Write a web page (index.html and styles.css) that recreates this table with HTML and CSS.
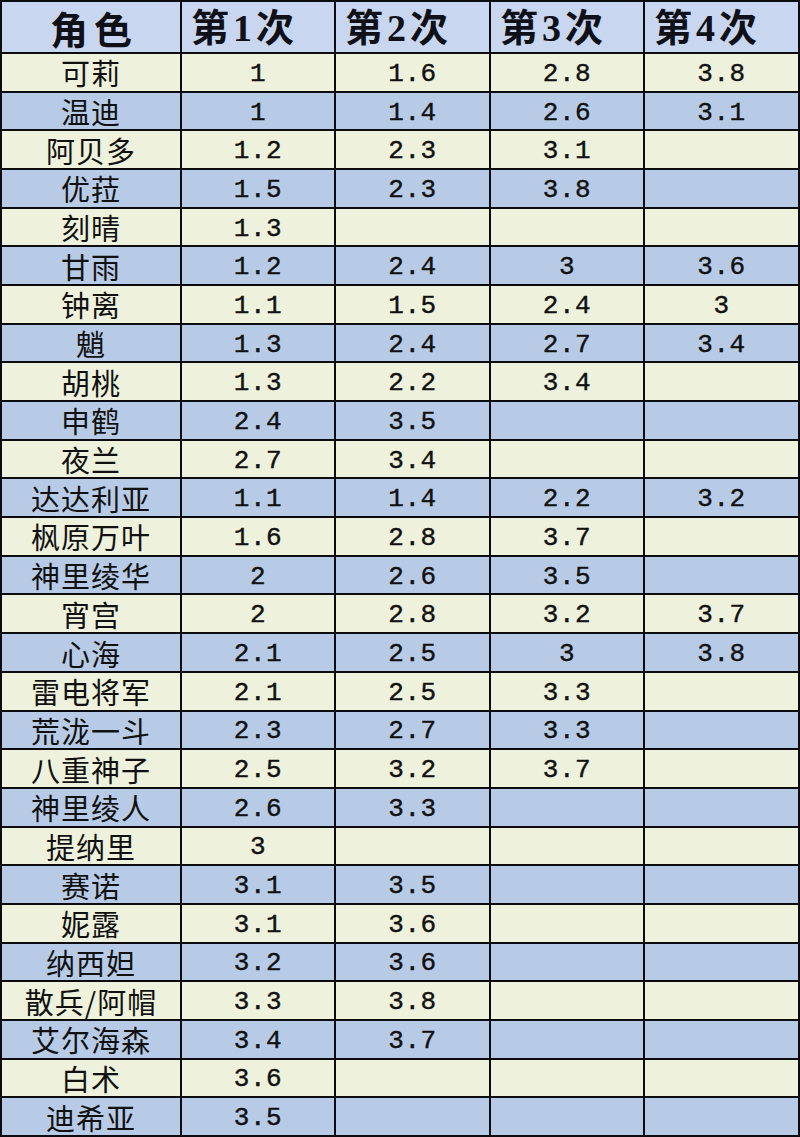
FILE: index.html
```html
<!DOCTYPE html>
<html lang="zh-CN">
<head>
<meta charset="utf-8">
<title>角色表</title>
<link rel="stylesheet" href="styles.css">
</head>
<body>
<div class="sheet">
  <div class="row head"><div class="name">角色</div><div>第1次</div><div>第2次</div><div>第3次</div><div>第4次</div></div>
  <div class="row cream"><div class="name">可莉</div><div>1</div><div>1.6</div><div>2.8</div><div>3.8</div></div>
  <div class="row blue"><div class="name">温迪</div><div>1</div><div>1.4</div><div>2.6</div><div>3.1</div></div>
  <div class="row cream"><div class="name">阿贝多</div><div>1.2</div><div>2.3</div><div>3.1</div><div></div></div>
  <div class="row blue"><div class="name">优菈</div><div>1.5</div><div>2.3</div><div>3.8</div><div></div></div>
  <div class="row cream"><div class="name">刻晴</div><div>1.3</div><div></div><div></div><div></div></div>
  <div class="row blue"><div class="name">甘雨</div><div>1.2</div><div>2.4</div><div>3</div><div>3.6</div></div>
  <div class="row cream"><div class="name">钟离</div><div>1.1</div><div>1.5</div><div>2.4</div><div>3</div></div>
  <div class="row blue"><div class="name">魈</div><div>1.3</div><div>2.4</div><div>2.7</div><div>3.4</div></div>
  <div class="row cream"><div class="name">胡桃</div><div>1.3</div><div>2.2</div><div>3.4</div><div></div></div>
  <div class="row blue"><div class="name">申鹤</div><div>2.4</div><div>3.5</div><div></div><div></div></div>
  <div class="row cream"><div class="name">夜兰</div><div>2.7</div><div>3.4</div><div></div><div></div></div>
  <div class="row blue"><div class="name">达达利亚</div><div>1.1</div><div>1.4</div><div>2.2</div><div>3.2</div></div>
  <div class="row cream"><div class="name">枫原万叶</div><div>1.6</div><div>2.8</div><div>3.7</div><div></div></div>
  <div class="row blue"><div class="name">神里绫华</div><div>2</div><div>2.6</div><div>3.5</div><div></div></div>
  <div class="row cream"><div class="name">宵宫</div><div>2</div><div>2.8</div><div>3.2</div><div>3.7</div></div>
  <div class="row blue"><div class="name">心海</div><div>2.1</div><div>2.5</div><div>3</div><div>3.8</div></div>
  <div class="row cream"><div class="name">雷电将军</div><div>2.1</div><div>2.5</div><div>3.3</div><div></div></div>
  <div class="row blue"><div class="name">荒泷一斗</div><div>2.3</div><div>2.7</div><div>3.3</div><div></div></div>
  <div class="row cream"><div class="name">八重神子</div><div>2.5</div><div>3.2</div><div>3.7</div><div></div></div>
  <div class="row blue"><div class="name">神里绫人</div><div>2.6</div><div>3.3</div><div></div><div></div></div>
  <div class="row cream"><div class="name">提纳里</div><div>3</div><div></div><div></div><div></div></div>
  <div class="row blue"><div class="name">赛诺</div><div>3.1</div><div>3.5</div><div></div><div></div></div>
  <div class="row cream"><div class="name">妮露</div><div>3.1</div><div>3.6</div><div></div><div></div></div>
  <div class="row blue"><div class="name">纳西妲</div><div>3.2</div><div>3.6</div><div></div><div></div></div>
  <div class="row cream"><div class="name">散兵/阿帽</div><div>3.3</div><div>3.8</div><div></div><div></div></div>
  <div class="row blue"><div class="name">艾尔海森</div><div>3.4</div><div>3.7</div><div></div><div></div></div>
  <div class="row cream"><div class="name">白术</div><div>3.6</div><div></div><div></div><div></div></div>
  <div class="row blue"><div class="name">迪希亚</div><div>3.5</div><div></div><div></div><div></div></div>
</div>
</body>
</html>
```

FILE: styles.css
```css
html, body {
  margin: 0;
  padding: 0;
  background: #ffffff;
}

.sheet {
  width: 800px;
  height: 1137px;
  box-sizing: border-box;
  display: grid;
  grid-template-columns: 178px 152px 153px 152px 153px;
  grid-template-rows: 50px repeat(28, minmax(0, 1fr));
  gap: 2px;
  padding: 2px;
  background: #0c0c10;
  overflow: hidden;
}

.row {
  display: contents;
}

.row > div {
  display: flex;
  align-items: center;
  justify-content: center;
  min-height: 0;
  color: #111111;
  font-family: "Liberation Mono", "Noto Sans CJK SC", monospace;
  font-size: 26px;
  line-height: 1;
  letter-spacing: 0.5px;
  font-weight: 400;
  padding-top: 3px;
  box-sizing: border-box;
  -webkit-text-stroke: 0.4px #111111;
}

.row > div.name {
  font-family: "Noto Sans CJK SC", sans-serif;
  font-size: 29px;
  font-weight: 400;
  letter-spacing: 1px;
  padding-top: 1px;
  -webkit-text-stroke: 0;
}

.head > div {
  background: #c8d7ef;
  font-family: "Liberation Serif", "Noto Sans CJK SC", serif;
  font-weight: 700;
  font-size: 38px;
  letter-spacing: 4px;
  padding-top: 2px;
  justify-content: flex-start;
  padding-left: 9px;
  color: #101018;
  -webkit-text-stroke: 0;
}

.head > div.name {
  font-family: "Noto Sans CJK SC", sans-serif;
  font-weight: 700;
  font-size: 38px;
  letter-spacing: 6px;
  justify-content: center;
  padding-left: 6px;
  padding-top: 2px;
}

.cream > div {
  background: #eef2dc;
}

.blue > div {
  background: #b8cbe6;
}
```
